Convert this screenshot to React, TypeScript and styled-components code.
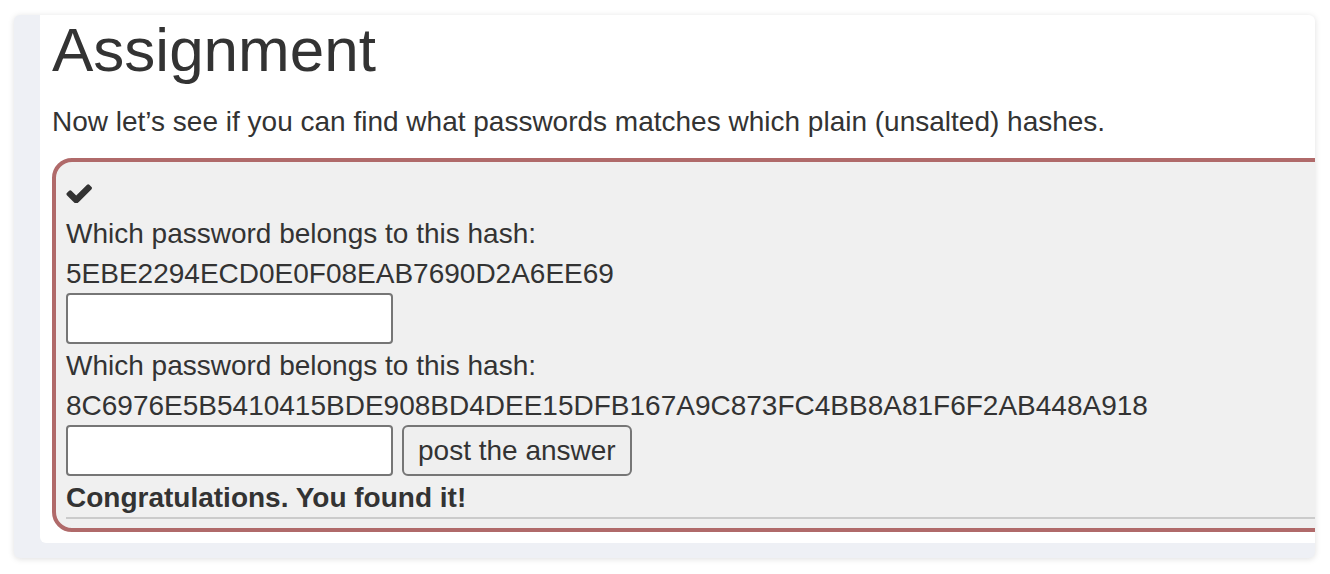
import styled, { createGlobalStyle } from "styled-components";

const GlobalStyle = createGlobalStyle`
  html, body {
    margin: 0;
    padding: 0;
    background: #fff;
  }
  body {
    font-family: "Liberation Sans", Arial, Helvetica, sans-serif;
    color: #333;
  }
`;

const Page = styled.div`
  padding: 15px 15px 15px 14px;
`;

const Card = styled.div`
  width: 1301px;
  background: #eef0f5;
  border-radius: 6px;
  box-shadow: 0 1px 6px rgba(0, 0, 0, 0.13);
  padding: 0 0 15px 26px;
  box-sizing: border-box;
  overflow: hidden;
`;

const Panel = styled.div`
  background: #fff;
  border-bottom-left-radius: 6px;
  padding: 0 0 11px 12px;
  overflow: hidden;
`;

const Title = styled.h1`
  margin: 0;
  padding-top: 1px;
  font-size: 62px;
  line-height: 67px;
  font-weight: 400;
  color: #333;
`;

const Lead = styled.p`
  margin: 17px 0 18px;
  padding-top: 3px;
  font-size: 28px;
  line-height: 37px;
`;

const Assignment = styled.div`
  width: 1320px;
  background: #f0f0f0;
  border: 4px solid #b06a6a;
  border-radius: 20px;
  padding: 10px 10px 9px;
  font-size: 28px;
`;

const Line = styled.div<{ $bold?: boolean }>`
  padding-top: 3px;
  line-height: 37px;
  font-weight: ${(p) => (p.$bold ? 700 : 400)};
  white-space: nowrap;
`;

const IconLine = styled.div`
  height: 40px;
  padding-top: 2px;
  box-sizing: border-box;
  display: flex;
  align-items: center;
`;

const Row = styled.div`
  display: flex;
  gap: 9px;
  margin-top: 1px;
`;

const Input = styled.input`
  width: 327px;
  height: 51px;
  box-sizing: border-box;
  border: 2px solid #767676;
  border-radius: 4px;
  background: #fff;
  font: inherit;
  padding: 0 8px;
`;

const Button = styled.button`
  height: 51px;
  box-sizing: border-box;
  border: 2px solid #767676;
  border-radius: 6px;
  background: #efefef;
  color: #333;
  font-family: "Liberation Sans", Arial, sans-serif;
  font-size: 28px;
  padding: 0 14px;
`;

const Rule = styled.hr`
  margin: 1px 0 0;
  border: 0;
  border-top: 2px solid #cbcbcb;
`;

const Check = () => (
  <svg width="26" height="19" viewBox="97 338 1574 1116" fill="#333">
    <path d="M1671 566q0 40-28 68l-724 724-136 136q-28 28-68 28t-68-28l-136-136-362-362q-28-28-28-68t28-68l136-136q28-28 68-28t68 28l294 295 656-657q28-28 68-28t68 28l136 136q28 28 28 68z" />
  </svg>
);

const hashes = [
  "5EBE2294ECD0E0F08EAB7690D2A6EE69",
  "8C6976E5B5410415BDE908BD4DEE15DFB167A9C873FC4BB8A81F6F2AB448A918",
];

export default function App() {
  return (
    <>
      <GlobalStyle />
      <Page>
        <Card>
          <Panel>
            <Title>Assignment</Title>
            <Lead>
              Now let’s see if you can find what passwords matches which plain
              (unsalted) hashes.
            </Lead>
            <Assignment>
              <IconLine>
                <Check />
              </IconLine>
              {hashes.map((h, i) => (
                <div key={h}>
                  <Line>Which password belongs to this hash:</Line>
                  <Line>{h}</Line>
                  <Row>
                    <Input type="text" />
                    {i === hashes.length - 1 && <Button>post the answer</Button>}
                  </Row>
                </div>
              ))}
              <Line $bold>Congratulations. You found it!</Line>
              <Rule />
            </Assignment>
          </Panel>
        </Card>
      </Page>
    </>
  );
}
